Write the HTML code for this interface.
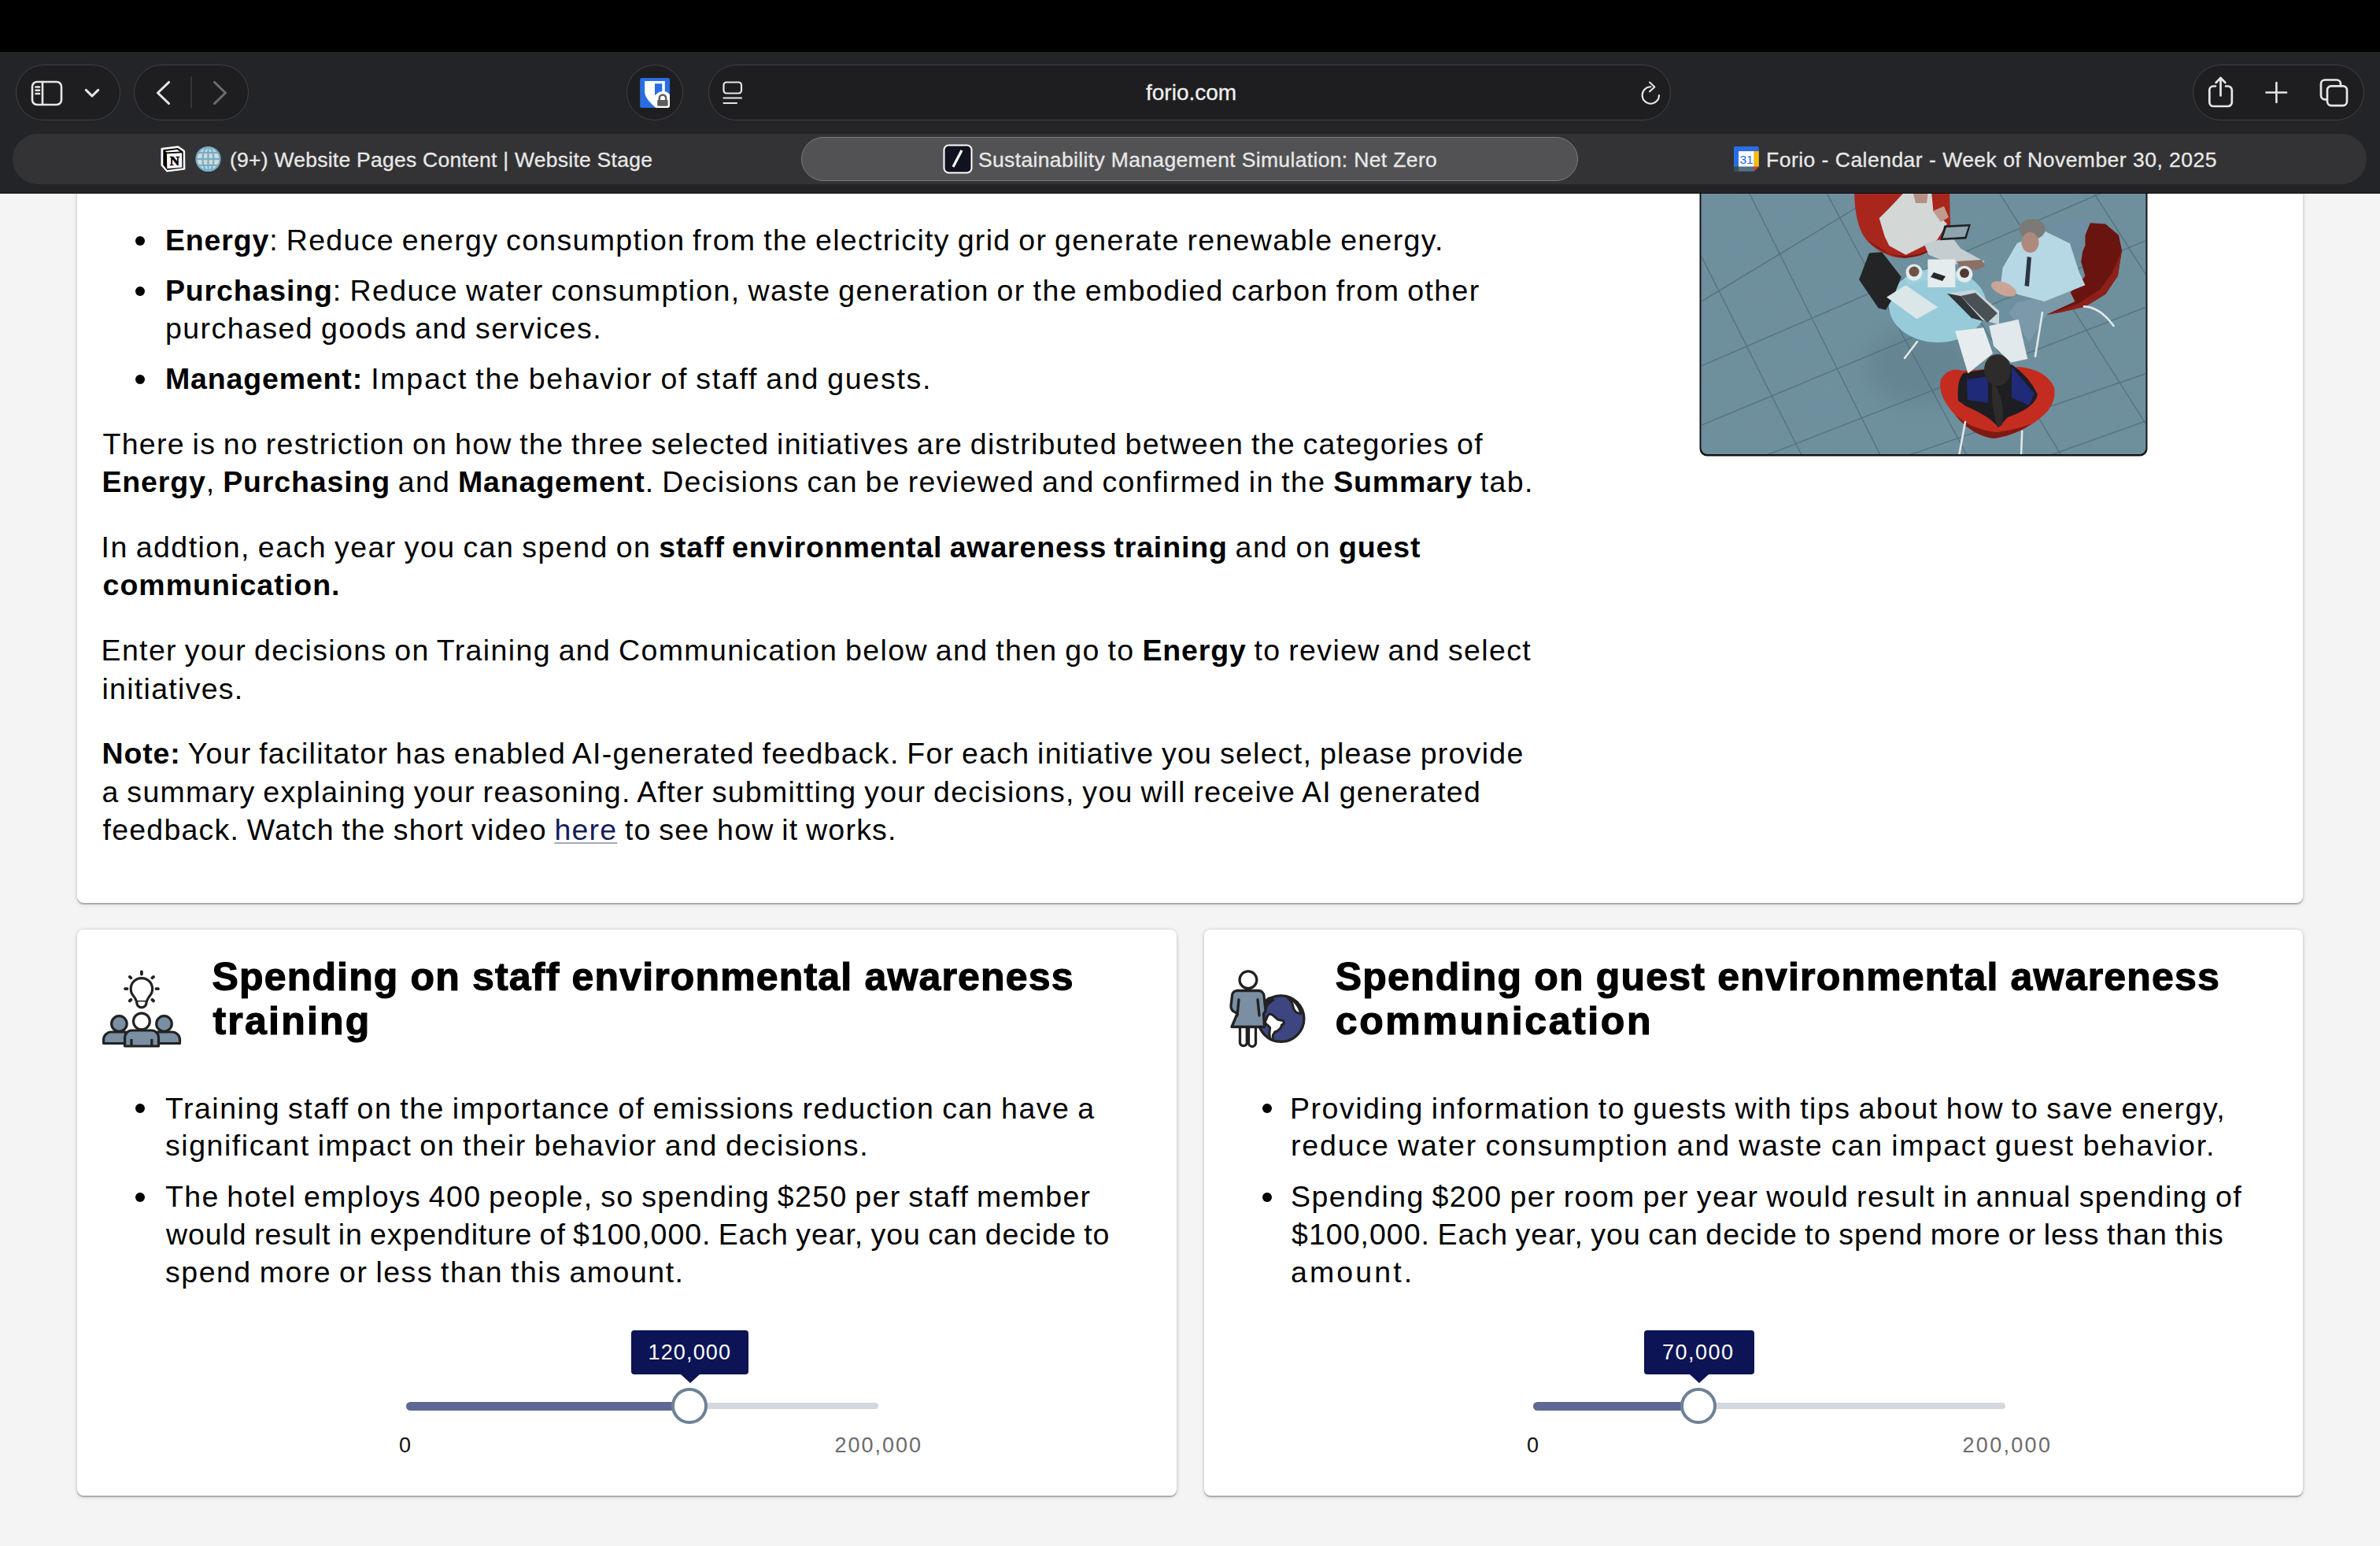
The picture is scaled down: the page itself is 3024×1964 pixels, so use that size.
<!DOCTYPE html><html><head><meta charset="utf-8"><style>
*{box-sizing:border-box}
html,body{margin:0;padding:0}
body{width:3024px;height:1964px;overflow:hidden;position:relative;background:#f4f4f4;font-family:"Liberation Sans",sans-serif;color:#000}
.abs{position:absolute}
.ln{position:absolute;line-height:0;white-space:nowrap;color:#000}
.ln b{font-weight:bold;letter-spacing:0.85px}
.ln a{color:#141d5c;text-decoration:underline;text-decoration-color:#a3abba;text-decoration-thickness:2px;text-underline-offset:3px}
.bul{position:absolute;width:12px;height:12px;border-radius:50%;background:#000}
.card{position:absolute;background:#fff;border-radius:8px;box-shadow:0 2px 1px rgba(0,0,0,.22),0 0 4px rgba(0,0,0,.16),0 3px 7px rgba(0,0,0,.07)}
#topbar{position:absolute;left:0;top:0;width:3024px;height:66px;background:#000}
#toolbar{position:absolute;left:0;top:66px;width:3024px;height:180px;background:#232427;border-bottom:1px solid #0d0d0e}
.pill{position:absolute;background:#1e1e20;border:1.5px solid #414144;border-radius:40px}
#tabbar{position:absolute;left:16px;top:170px;width:2991px;height:64px;background:#333335;border-radius:32px}
#acttab{position:absolute;left:1018px;top:174px;width:987px;height:56px;background:#525254;border:1.5px solid #7c7c7e;border-radius:28px}
.tt{position:absolute;line-height:0;white-space:nowrap;color:#e8e8e8;font-size:26.5px;-webkit-text-stroke:0.3px #e8e8e8}
.tip{position:absolute;background:#0c1456;border-radius:4px;color:#fff}
.tip:after{content:"";position:absolute;left:50%;bottom:-11px;margin-left:-12px;border-left:12px solid transparent;border-right:12px solid transparent;border-top:11px solid #0c1456}
.trk{position:absolute;height:8px;background:#d3d7de;border-radius:4px}
.fill{position:absolute;height:11px;background:#5e6894;border-radius:6px}
.thumb{position:absolute;width:46px;height:46px;border-radius:50%;background:#fff;border:4px solid #6e8196}
.lab{position:absolute;line-height:0;white-space:nowrap;font-size:27px}
</style></head><body>
<div class="card" style="left:98px;top:120px;width:2828px;height:1027px"></div>

<svg class="abs" style="left:2158px;top:150px" width="572" height="432" viewBox="2158 150 572 432">
 <defs>
  <clipPath id="ic"><rect x="2161.5" y="150" width="565" height="427" rx="8"/></clipPath>
  <filter id="nz" x="0" y="0" width="100%" height="100%"><feTurbulence type="fractalNoise" baseFrequency="0.9" numOctaves="1" seed="3"/><feColorMatrix values="0 0 0 0 0.3  0 0 0 0 0.42  0 0 0 0 0.48  0 0 0 .35 0"/></filter>
 <filter id="bl" x="-50%" y="-50%" width="200%" height="200%"><feGaussianBlur stdDeviation="14"/></filter>
 </defs>
 <rect x="2159.5" y="150" width="569" height="429.5" rx="9.5" fill="#141414"/>
 <g clip-path="url(#ic)">
  <rect x="2150" y="140" width="600" height="450" fill="#6b8d9b"/>
  <rect x="2150" y="140" width="600" height="450" filter="url(#nz)" opacity=".5"/>
  <ellipse cx="2440" cy="465" rx="70" ry="50" fill="#4f6e7c" opacity=".3" filter="url(#bl)"/>
  <g stroke="#4b6875" stroke-width="1.4" fill="none" opacity=".7">
   <path d="M2150 302 L2290 580"/><path d="M2175 150 L2390 580"/><path d="M2270 150 L2500 580"/>
   <path d="M2360 150 L2620 580"/><path d="M2480 150 L2740 560"/><path d="M2600 150 L2740 370"/>
   <path d="M2150 390 L2390 245"/><path d="M2150 470 L2740 215"/><path d="M2150 545 L2740 300"/>
   <path d="M2240 580 L2740 385"/><path d="M2420 580 L2740 470"/><path d="M2600 580 L2740 530"/>
  </g>
  <!-- top chair -->
  <path d="M2356 240 L2477 240 L2478 285 Q2476 300 2462 312 L2440 324 Q2420 330 2405 326 Q2380 318 2368 300 Q2356 280 2356 240 Z" fill="#a9261c"/>
  <path d="M2372 305 Q2390 322 2420 328 Q2445 326 2460 314 L2440 322 Q2420 328 2400 322 Z" fill="#7a1913"/>
  <path d="M2387.7 277.3 L2401.7 263.3 L2421.5 242 L2454 242 L2456.4 268 L2473.9 284.2 L2461 305.2 L2444.8 312.2 L2421.5 323.8 L2400.5 312.2 L2394.7 300.5 Z" fill="#d3d7d5"/>
  <path d="M2444.8 309.8 L2479.7 300.5 L2491.3 315.7 L2514.6 328.5 L2521.6 332 L2512.3 342.4 L2485.5 335.5 L2462.2 328.5 L2450.6 323.8 Z" fill="#c4cdd0"/>
  <path d="M2486 332 L2518 330 L2522 338 L2512 343 L2490 340 Z" fill="#8b7067"/>
  <path d="M2430 242 L2450 242 L2448 258 L2434 258 Z" fill="#b48f84"/>
  <path d="M2456 268 L2470 262 L2476 276 L2466 282 Z" fill="#c09a8e"/>
  <path d="M2470.4 286.6 L2504.1 284.8 L2498.3 303.4 L2465.1 305.2 Z" fill="#1f2224"/>
  <path d="M2473 289 L2501 287.5 L2496.5 300.8 L2468.5 302.5 Z" fill="#8ea3ad"/>
  <!-- right chair -->
  <path d="M2655.8 283.3 L2675.2 284.6 L2692 298.8 L2696 318.2 L2690.8 350.6 L2675.2 373.8 L2649.4 389.4 L2617 397.1 L2600.2 399.7 L2636.4 366.1 L2649.4 350.6 L2644.2 332.4 L2649.4 298.8 Z" fill="#6a1410"/>
  <path d="M2696 318 L2690.8 350.6 L2675.2 373.8 L2649.4 389.4 L2617 397.1 L2600.2 399.7 L2640 386 L2668 368 L2684 346 Z" fill="#8c2119"/>
  <path d="M2600.2 285.9 L2649.4 280.7 L2649.4 311.7 L2640.3 332.4 L2623.5 314.3 Z" fill="#6f8ea1"/>
  <!-- table -->
  <ellipse cx="2462" cy="388" rx="62" ry="47" fill="#97cbd9"/>
  <path d="M2420 352 Q2462 336 2505 350 L2500 360 Q2462 348 2424 362 Z" fill="#a9d6e2" opacity=".6"/>
  <!-- right man -->
  <path d="M2562.7 384.2 L2630 370 L2636.4 382.9 L2600.2 399.7 L2578.2 434.6 L2569.2 421.7 L2552.3 397.1 Z" fill="#7b99a8"/>
  <path d="M2544.6 340.2 L2562.7 309.2 L2597.6 293.6 L2630 309.2 L2641.6 345.4 L2649.4 362.2 L2630 370 L2597.6 382.9 L2562.7 373.8 L2542 362.2 Z" fill="#b5d8e4"/>
  <ellipse cx="2582" cy="291" rx="16.8" ry="13" fill="#7b7a76"/>
  <ellipse cx="2579.5" cy="308" rx="11" ry="13" fill="#ae8a7c"/>
  <path d="M2575.8 326 L2581 327 L2578 364 L2572.5 363 Z" fill="#2e3540"/>
  <ellipse cx="2546" cy="367" rx="17" ry="8" fill="#c9a497" transform="rotate(22 2546 367)"/>
  <!-- briefcase -->
  <path d="M2362.1 355.2 L2374.9 321.5 L2391.2 320.3 L2415.7 351.8 L2405.2 378.5 L2395.9 393.7 L2386.6 391.3 Z" fill="#232425"/>
  <!-- table items -->
  <circle cx="2432" cy="346" r="10.5" fill="#e3ebed"/><circle cx="2432" cy="345" r="6.5" fill="#6e5248"/>
  <circle cx="2496" cy="348.3" r="10.5" fill="#e3ebed"/><circle cx="2496" cy="347" r="6" fill="#4f3a33"/>
  <path d="M2449.4 329.6 L2484.4 329.6 L2484.4 365.1 L2449.4 365.1 Z" fill="#e4ecee"/>
  <path d="M2457 346 L2472 351 L2468 357 L2453 352 Z" fill="#25292c"/>
  <path d="M2397 377.4 L2421.5 362.2 L2462.2 390.2 L2435.5 405.3 Z" fill="#dbe6e9"/>
  <path d="M2473.9 372.7 L2508.8 368 L2540 394.8 L2540 412.3 L2514.6 405.3 Z" fill="#c9d5d9"/>
  <path d="M2491 376 L2510 372 L2538 398 L2525 410 Z" fill="#4a5154"/>
  <path d="M2473.9 372.7 L2491 376 L2520 408 L2505 404 Z" fill="#2f3538"/>
  <!-- bottom chair -->
  <path d="M2466 482 Q2476 465 2494 471 L2566 466 Q2600 470 2610 492 Q2614 515 2591 532 Q2565 553 2533 557 Q2505 553 2484 527 Q2461 502 2466 482 Z" fill="#c52c20"/>
  <path d="M2484 527 Q2505 553 2533 557 Q2560 553 2582 538 Q2555 548 2535 549 Q2505 545 2484 527 Z" fill="#7e1a14"/>
  <!-- woman -->
  <path d="M2488 509 Q2486 482 2495 474 L2556 463 Q2578 478 2589 501 Q2586 518 2551 530 L2539 543 Q2530 530 2498 516 Z" fill="#1d1d22"/>
  <path d="M2499 482 L2526 478 L2526 512 L2500 508 Z" fill="#1f2a78"/>
  <path d="M2556 466 L2585 500 L2578 515 L2556 505 Z" fill="#1f2a78"/>
  <ellipse cx="2538" cy="470" rx="17" ry="20" fill="#2e2b2b"/>
  <path d="M2532 485 Q2548 505 2544 540 L2538 543 Q2528 510 2532 485 Z" fill="#2e2b2b"/>
  <!-- binder -->
  <path d="M2484.2 420.4 L2520.3 416.3 L2532 448.9 L2500.5 474.5 Z" fill="#e7edef"/>
  <path d="M2527.3 414 L2564.6 405.8 L2576.2 455.9 L2555.2 460.5 L2533.1 439.6 Z" fill="#e1e9ec"/>
  <!-- legs -->
  <g stroke="#e0e6e8" stroke-width="2.6" stroke-linecap="round" fill="none">
   <path d="M2497 536 L2488.9 580"/><path d="M2569.2 547.8 L2568 580"/>
   <path d="M2595 397 L2586 452.8"/><path d="M2648 389.4 Q2668 390 2685.6 414"/>
   <path d="M2436 434 L2420 455"/>
  </g>
 </g>
</svg>

<div class="card" style="left:97.5px;top:1181px;width:1397px;height:719px"></div>
<div class="card" style="left:1530px;top:1181px;width:1396px;height:719px"></div>
<div class="ln" style="left:210.0px;top:305.1px;word-spacing:-2px;font-size:37.5px;letter-spacing:1.329px;"><b>Energy</b>: Reduce energy consumption from the electricity grid or generate renewable energy.</div>
<div class="ln" style="left:210.0px;top:368.8px;word-spacing:-2px;font-size:37.5px;letter-spacing:1.416px;"><b>Purchasing</b>: Reduce water consumption, waste generation or the embodied carbon from other</div>
<div class="ln" style="left:210.0px;top:416.5px;word-spacing:-2px;font-size:37.5px;letter-spacing:1.446px;">purchased goods and services.</div>
<div class="ln" style="left:210.0px;top:481.1px;word-spacing:-2px;font-size:37.5px;letter-spacing:1.725px;"><b>Management:</b> Impact the behavior of staff and guests.</div>
<div class="ln" style="left:130.5px;top:563.6px;word-spacing:-2px;font-size:37.5px;letter-spacing:1.275px;">There is no restriction on how the three selected initiatives are distributed between the categories of</div>
<div class="ln" style="left:129.5px;top:612.4px;word-spacing:-2px;font-size:37.5px;letter-spacing:1.325px;"><b>Energy</b>, <b>Purchasing</b> and <b>Management</b>. Decisions can be reviewed and confirmed in the <b>Summary</b> tab.</div>
<div class="ln" style="left:128.5px;top:694.9px;word-spacing:-2px;font-size:37.5px;letter-spacing:1.479px;">In addtion, each year you can spend on <b>staff environmental awareness training</b> and on <b>guest</b></div>
<div class="ln" style="left:130.5px;top:742.9px;word-spacing:-2px;font-size:37.5px;letter-spacing:1.038px;font-weight:bold;">communication.</div>
<div class="ln" style="left:128.5px;top:825.8px;word-spacing:-2px;font-size:37.5px;letter-spacing:1.364px;">Enter your decisions on Training and Communication below and then go to <b>Energy</b> to review and select</div>
<div class="ln" style="left:129.5px;top:875.0px;word-spacing:-2px;font-size:37.5px;letter-spacing:1.282px;">initiatives.</div>
<div class="ln" style="left:129.5px;top:956.7px;word-spacing:-2px;font-size:37.5px;letter-spacing:1.27px;"><b>Note:</b> Your facilitator has enabled AI-generated feedback. For each initiative you select, please provide</div>
<div class="ln" style="left:129.5px;top:1005.5px;word-spacing:-2px;font-size:37.5px;letter-spacing:1.291px;">a summary explaining your reasoning. After submitting your decisions, you will receive AI generated</div>
<div class="ln" style="left:130.5px;top:1053.5px;word-spacing:-2px;font-size:37.5px;letter-spacing:1.223px;">feedback. Watch the short video <a>here</a> to see how it works.</div>
<div class="ln" style="left:269.5px;top:1240.7px;word-spacing:0px;font-size:50px;letter-spacing:1.162px;font-weight:bold;-webkit-text-stroke:1.2px #000;">Spending on staff environmental awareness</div>
<div class="ln" style="left:270.5px;top:1296.5px;word-spacing:0px;font-size:50px;letter-spacing:2.214px;font-weight:bold;-webkit-text-stroke:1.2px #000;">training</div>
<div class="ln" style="left:210.0px;top:1407.6px;word-spacing:-2px;font-size:37.5px;letter-spacing:1.5px;">Training staff on the importance of emissions reduction can have a</div>
<div class="ln" style="left:210.0px;top:1455.3px;word-spacing:-2px;font-size:37.5px;letter-spacing:1.54px;">significant impact on their behavior and decisions.</div>
<div class="ln" style="left:210.0px;top:1519.8px;word-spacing:-2px;font-size:37.5px;letter-spacing:1.332px;">The hotel employs 400 people, so spending $250 per staff member</div>
<div class="ln" style="left:211.0px;top:1567.5px;word-spacing:-2px;font-size:37.5px;letter-spacing:0.932px;">would result in expenditure of $100,000. Each year, you can decide to</div>
<div class="ln" style="left:210.0px;top:1616.4px;word-spacing:-2px;font-size:37.5px;letter-spacing:1.514px;">spend more or less than this amount.</div>
<div class="ln" style="left:1696.8px;top:1240.7px;word-spacing:0px;font-size:50px;letter-spacing:1.197px;font-weight:bold;-webkit-text-stroke:1.2px #000;">Spending on guest environmental awareness</div>
<div class="ln" style="left:1696.8px;top:1296.5px;word-spacing:0px;font-size:50px;letter-spacing:2.6px;font-weight:bold;-webkit-text-stroke:1.2px #000;">communication</div>
<div class="ln" style="left:1639.0px;top:1407.6px;word-spacing:-2px;font-size:37.5px;letter-spacing:1.508px;">Providing information to guests with tips about how to save energy,</div>
<div class="ln" style="left:1640.0px;top:1455.3px;word-spacing:-2px;font-size:37.5px;letter-spacing:1.863px;">reduce water consumption and waste can impact guest behavior.</div>
<div class="ln" style="left:1640.0px;top:1519.8px;word-spacing:-2px;font-size:37.5px;letter-spacing:1.406px;">Spending $200 per room per year would result in annual spending of</div>
<div class="ln" style="left:1641.0px;top:1567.5px;word-spacing:-2px;font-size:37.5px;letter-spacing:1.023px;">$100,000. Each year, you can decide to spend more or less than this</div>
<div class="ln" style="left:1640.0px;top:1616.4px;word-spacing:-2px;font-size:37.5px;letter-spacing:3.117px;">amount.</div>
<div class="bul" style="left:172.0px;top:299.8px"></div>
<div class="bul" style="left:172.0px;top:363.5px"></div>
<div class="bul" style="left:172.0px;top:475.8px"></div>
<div class="bul" style="left:172.3px;top:1402.3px"></div>
<div class="bul" style="left:172.3px;top:1514.5px"></div>
<div class="bul" style="left:1603.5px;top:1402.3px"></div>
<div class="bul" style="left:1603.5px;top:1514.5px"></div>

<svg class="abs" style="left:120px;top:1220px" width="120" height="120" viewBox="0 0 120 120">
 <g fill="none" stroke="#222" stroke-width="3.2" stroke-linecap="round">
  <path d="M53.6 52.5 Q52.5 49 49.9 45.6 A13.7 13.7 0 1 1 69.9 45.6 Q67.3 49 66.2 52.5 Z" fill="#fff"/>
  <path d="M53.8 52.5 V53.8 A6.1 6.1 0 0 0 66 53.8 V52.5" fill="#fff"/>
  <line x1="59.9" y1="14.5" x2="59.9" y2="17.5" stroke-width="3.8"/>
  <line x1="39" y1="36.1" x2="41.5" y2="36.1" stroke-width="3.8"/>
  <line x1="78.5" y1="36.1" x2="81" y2="36.1" stroke-width="3.8"/>
  <line x1="44.8" y1="21" x2="46.4" y2="22.3" stroke-width="3.8"/>
  <line x1="75" y1="21" x2="73.4" y2="22.3" stroke-width="3.8"/>
  <line x1="44.8" y1="51.5" x2="46.4" y2="50" stroke-width="3.8"/>
  <line x1="75" y1="51.5" x2="73.4" y2="50" stroke-width="3.8"/>
 </g>
 <g stroke="#222" stroke-width="3.2" stroke-linejoin="round">
  <path d="M11.6 105.5 V101 A10 10 0 0 1 21.6 91 H40 V105.5 Z" fill="#7b8fa3"/>
  <path d="M108.5 105.5 V101 A10 10 0 0 0 98.5 91 H80 V105.5 Z" fill="#7b8fa3"/>
  <circle cx="31.4" cy="80.5" r="9.8" fill="#7b8fa3"/>
  <circle cx="88.5" cy="80.5" r="9.8" fill="#7b8fa3"/>
  <path d="M38.6 109 V98 A9 9 0 0 1 47.6 89 H72.5 A9 9 0 0 1 81.5 98 V109 Z" fill="#7b8fa3"/>
  <circle cx="59.9" cy="77.5" r="10.4" fill="#fff"/>
  <line x1="47" y1="100" x2="47" y2="108"/><line x1="72.8" y1="100" x2="72.8" y2="108"/>
 </g>
</svg>
<svg class="abs" style="left:1550px;top:1220px" width="120" height="120" viewBox="0 0 120 120">
 <g stroke="#222" stroke-width="3.3" stroke-linejoin="round" stroke-linecap="round">
  <circle cx="77.6" cy="74.1" r="29.3" fill="#3d4681"/>
  <path d="M85.4 46.8 Q92 52 93.3 60 Q95 67 102.8 67.8 A29 29 0 0 0 85.4 46.8 Z" fill="#fff" stroke-width="3"/>
  <path d="M59 74.5 Q61 68.5 63.6 68.3 Q66 68.5 67.5 69.9 L73.7 75.3 L80.7 76.8 L81.5 80 L78.4 82.3 L77.6 85.4 L73.7 89.3 L69.9 90.8 L67.5 94.7 L66.8 100.9 L63.6 100.1 L62.9 93.1 L63.6 85.4 L60.5 82.3 L58.2 80.7 L57.4 77.6 Z" fill="#fff" stroke-width="3"/>
  <path d="M57 52 Q62 46 66 47.5 L68.5 50.5 Q63 54 60 58 Q58 62 57 66 Z" fill="#222" stroke-width="2"/>
  <path d="M25.5 86 V105 A4.5 4.5 0 0 0 34.3 105 V86 M36.5 86 V105 A4.5 4.5 0 0 0 45.5 105 V86" fill="#fff"/>
  <path d="M21 38.5 H49 A7 7 0 0 1 56 45 L58 64 L55.5 68 L56.5 84.5 H15 L22 68 L19.5 66 Q14 64 14 58 L15.5 45 A7 7 0 0 1 21 38.5 Z" fill="#7b8fa3"/>
  <line x1="24" y1="50" x2="22" y2="70"/><line x1="48" y1="50" x2="50" y2="70"/>
  <circle cx="35.9" cy="24.8" r="10.9" fill="#fff"/>
 </g>
</svg>

<div class="trk" style="left:515.7px;top:1782px;width:600px"></div>
<div class="fill" style="left:515.7px;top:1780.5px;width:360.0px"></div>
<div class="thumb" style="left:852.7px;top:1762.5px"></div>
<div class="trk" style="left:1947.8px;top:1782px;width:600px"></div>
<div class="fill" style="left:1947.8px;top:1780.5px;width:210.0px"></div>
<div class="thumb" style="left:2134.8px;top:1762.5px"></div>

<div class="tip" style="left:802px;top:1690px;width:149px;height:56px"></div>
<div class="lab" style="left:823.5px;top:1718.3px;color:#fff;font-size:27px;letter-spacing:1.15px">120,000</div>
<div class="tip" style="left:2089px;top:1690px;width:140px;height:56px"></div>
<div class="lab" style="left:2112px;top:1718.3px;color:#fff;font-size:27px;letter-spacing:1.5px">70,000</div>
<div class="lab" style="left:507px;top:1835.6px;color:#111">0</div>
<div class="lab" style="left:1060.5px;top:1835.6px;color:#6b6b6b;letter-spacing:2px">200,000</div>
<div class="lab" style="left:1940px;top:1835.6px;color:#111">0</div>
<div class="lab" style="left:2493.5px;top:1835.6px;color:#6b6b6b;letter-spacing:2.3px">200,000</div>


<div id="topbar"></div>
<div id="toolbar"></div>
<div class="pill" style="left:20px;top:82px;width:133px;height:71px"></div>
<div class="pill" style="left:170px;top:82px;width:146px;height:71px"></div>
<div class="pill" style="left:796px;top:82px;width:72px;height:71px;border-radius:50%"></div>
<div class="pill" style="left:900px;top:82px;width:1223px;height:71px"></div>
<div class="pill" style="left:2786px;top:82px;width:218px;height:71px"></div>
<svg class="abs" style="left:0;top:66px" width="3024" height="104" viewBox="0 66 3024 104">
 <g fill="none" stroke="#e6e6e6" stroke-width="2.6" stroke-linecap="round" stroke-linejoin="round">
  <rect x="41" y="104" width="37" height="29" rx="6"/>
  <line x1="54" y1="104" x2="54" y2="133"/>
  <line x1="45.5" y1="110.5" x2="50" y2="110.5"/><line x1="45.5" y1="114.8" x2="50" y2="114.8"/><line x1="45.5" y1="119" x2="50" y2="119"/>
  <polyline points="109.3,114.3 117,122 124.7,114.3" stroke-width="3.1"/>
  <polyline points="214.5,104.5 200.5,118 214.5,131.5" stroke-width="3.1"/>
  <polyline stroke="#6c6c6e" stroke-width="3.1" points="272.5,104.5 286.5,118 272.5,131.5"/>
  <line stroke="#3e3e40" stroke-width="1.5" x1="243" y1="98" x2="243" y2="137"/>
  <rect x="919.5" y="104.5" width="22.5" height="14" rx="3.5" stroke-width="2.2"/>
  <line x1="919.5" y1="124.5" x2="942" y2="124.5" stroke-width="2.2"/>
  <line x1="919.5" y1="131" x2="936" y2="131" stroke-width="2.2"/>
  <path d="M2097.3 110.3 A10.7 10.7 0 1 0 2108 121" stroke-width="2.1"/>
  <polyline points="2096,104.6 2102.3,110.4 2096,116.3" stroke-width="2.1"/>
  <path d="M2815 109.5 H2812.3 a5 5 0 0 0 -5 5 V130 a5 5 0 0 0 5 5 H2830.8 a5 5 0 0 0 5 -5 V114.5 a5 5 0 0 0 -5 -5 H2828" stroke-width="2.7"/>
  <line x1="2821.5" y1="99" x2="2821.5" y2="121.5" stroke-width="2.7"/>
  <polyline points="2815.6,105 2821.5,99 2827.4,105" stroke-width="2.7"/>
  <line x1="2892.4" y1="105" x2="2892.4" y2="130" stroke-width="2.6"/>
  <line x1="2879.5" y1="117.5" x2="2905" y2="117.5" stroke-width="2.6"/>
  <path d="M2956.5 126.3 H2954 a5 5 0 0 1 -5 -5 V106.5 a5 5 0 0 1 5 -5 H2969 a5 5 0 0 1 5 5 V109" stroke-width="2.7"/>
  <rect x="2957" y="109.3" width="25" height="24.8" rx="5" stroke-width="2.7"/>
 </g>
 <defs><clipPath id="extc"><rect x="813.2" y="98.9" width="37.8" height="38.1" rx="2.5"/></clipPath></defs>
 <rect x="813.2" y="98.9" width="37.8" height="38.1" rx="2.5" fill="#2a6de3"/>
 <g clip-path="url(#extc)">
  <path d="M819.2 103 H844.8 V126 L834 137.5 Q826 131 822 125 Q819.2 121 819.2 117 Z" fill="#fff"/>
  <rect x="832" y="106.2" width="9.3" height="14.5" fill="#2a6de3"/>
  <circle cx="842.3" cy="127.6" r="11.6" fill="#fff"/>
  <rect x="835.2" y="127" width="13.5" height="7.8" rx="1" fill="#5c5c5c"/>
  <path d="M837.8 127.5 v-2.8 a4.2 4.2 0 0 1 8.4 0 v2.8" fill="none" stroke="#5c5c5c" stroke-width="2.5"/>
 </g>
</svg>
<div class="tt" style="left:1456px;top:118.2px;font-size:28px;color:#f2f2f2;letter-spacing:0px">forio.com</div>
<div id="tabbar"></div>
<div id="acttab"></div>
<svg class="abs" style="left:0;top:170px" width="3024" height="64" viewBox="0 170 3024 64">
 <path d="M205 188.4 L226.5 185.8 L234.6 191.4 L234.9 215.1 L211.8 218 L205 210.2 Z" fill="#fff" stroke="#fff" stroke-width="1" stroke-linejoin="round"/>
 <path d="M207.3 190.3 L226 188.1 L232.7 192.6 L232.8 213.5 L212.5 215.9 L207.3 209.4 Z" fill="#000"/>
 <path d="M211.9 195.2 L231.1 194.3 L231.4 212.7 L212.3 214.2 Z" fill="#fff"/>
 <path d="M209.6 191.9 L225.1 190.1 L228.8 192.5 L212.1 193.6 Z" fill="#fff"/>
 <text x="221.8" y="210.3" font-family="Liberation Serif" font-weight="bold" font-size="17" text-anchor="middle" fill="#000" stroke="#000" stroke-width="0.7">N</text>
 <circle cx="264.5" cy="202" r="15.5" fill="#d8d8d8"/>
 <g fill="none" stroke="#6fb0c8" stroke-width="2.2">
  <circle cx="264.5" cy="202" r="15"/><ellipse cx="264.5" cy="202" rx="7" ry="15"/>
  <line x1="264.5" y1="187" x2="264.5" y2="217"/><line x1="249.5" y1="202" x2="279.5" y2="202"/>
  <line x1="252" y1="194" x2="277" y2="194"/><line x1="252" y1="210" x2="277" y2="210"/>
 </g>
 <rect x="1199.5" y="184.5" width="35" height="35" rx="6" fill="#10121f" stroke="#fff" stroke-width="2"/>
 <line x1="1211" y1="212" x2="1222" y2="191" stroke="#fff" stroke-width="3.2"/>
 <path d="M2205 186 H2232.8 a2 2 0 0 1 2 2 V211.7 L2228.7 217.5 H2205 a2 2 0 0 1 -2 -2 V188 a2 2 0 0 1 2 -2 Z" fill="#2a6ee6"/>
 <rect x="2209" y="192.1" width="19.7" height="19.6" fill="#fff"/>
 <rect x="2228.7" y="192.1" width="6.1" height="19.6" fill="#fbbc04"/>
 <path d="M2203 211.7 H2228.7 V217.5 H2205 a2 2 0 0 1 -2 -2 Z" fill="#54717e"/>
 <rect x="2203" y="211.7" width="6" height="5.8" fill="#3b4a52"/>
 <path d="M2228.7 211.7 H2234.8 L2228.7 217.5 Z" fill="#d93a26"/>
 <text x="2219" y="208" font-family="Liberation Sans, sans-serif" font-size="15.5" text-anchor="middle" fill="#1a66e6">31</text>
</svg>
<div class="tt" style="left:292px;top:202.6px;letter-spacing:0.25px">(9+) Website Pages Content | Website Stage</div>
<div class="tt" style="left:1243px;top:202.6px;letter-spacing:0.35px">Sustainability Management Simulation: Net Zero</div>
<div class="tt" style="left:2244px;top:202.6px;letter-spacing:0.48px">Forio - Calendar - Week of November 30, 2025</div>

</body></html>
